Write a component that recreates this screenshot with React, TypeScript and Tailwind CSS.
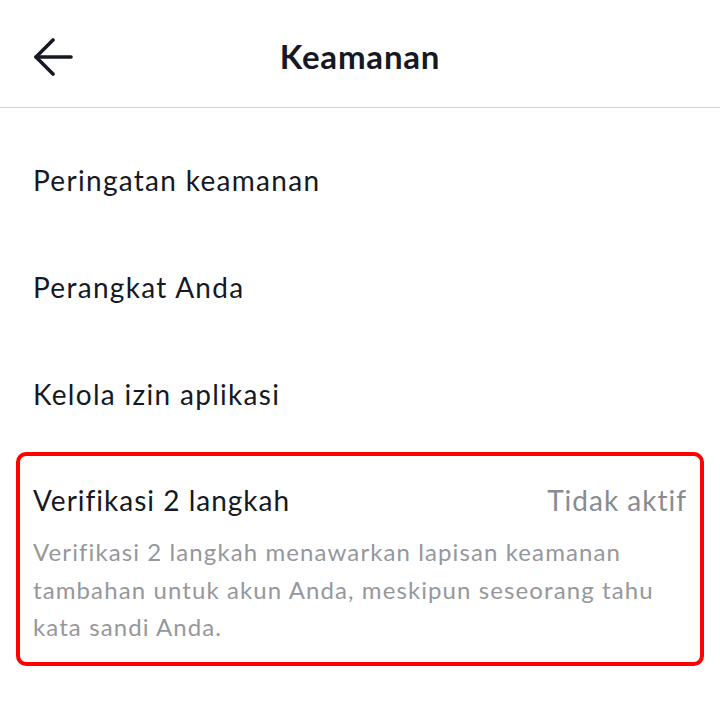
const items = ['Peringatan keamanan', 'Perangkat Anda', 'Kelola izin aplikasi'];

function BackArrow() {
  return (
    <svg width="40" height="38" viewBox="0 0 40 38" fill="none" stroke="currentColor" strokeWidth="3.6" strokeLinecap="round" strokeLinejoin="round">
      <path d="M19 2 L2 19 L19 36" />
      <path d="M2 19 H37" />
    </svg>
  );
}

export default function App() {
  return (
    <div className="w-[720px] h-[718px] bg-white text-[#161823] font-['Lato',sans-serif]">
      {/* Header */}
      <header className="relative h-[108px] flex items-center justify-center border-b border-[#d6d6d8]">
        <button className="absolute left-[34px] top-[38px]">
          <BackArrow />
        </button>
        <h1 className="text-[33px] font-bold tracking-[0.8px] pt-[6px]">Keamanan</h1>
      </header>

      {/* Settings list */}
      <div className="pt-[18px]">
        {items.map((label) => (
          <div key={label} className="h-[107px] flex items-center px-[33px] text-[28px] tracking-[1.3px]">
            {label}
          </div>
        ))}

        <div className="mx-[16px] mt-[5px] h-[214px] border-[4px] border-[#ff0000] rounded-[10px] px-[13px] pt-[23px]">
          <div className="flex items-center justify-between text-[28px] tracking-[1px]">
            <span>Verifikasi 2 langkah</span>
            <span className="text-[#8a8b91]">Tidak aktif</span>
          </div>
          <p className="mt-[12px] text-[24px] leading-[37.5px] tracking-[1.1px] text-[#96979c]">
            Verifikasi 2 langkah menawarkan lapisan keamanan tambahan untuk akun Anda, meskipun seseorang tahu kata sandi Anda.
          </p>
        </div>
      </div>
    </div>
  );
}
